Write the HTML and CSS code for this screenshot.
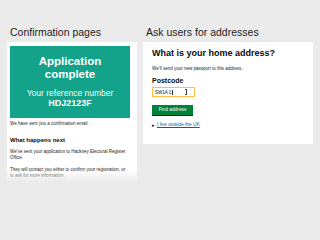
FILE: index.html
```html
<!DOCTYPE html>
<html>
<head>
<meta charset="utf-8">
<link rel="stylesheet" href="styles.css">
</head>
<body>
<main class="page">
  <section class="col col-left">
    <h2 class="col-title">Confirmation pages</h2>
    <div class="card card-confirm">
      <div class="panel">
        <div class="panel-title">Application<br>complete</div>
        <div class="panel-ref">Your reference number</div>
        <div class="panel-code">HDJ2123F</div>
      </div>
      <p class="small sent">We have sent you a confirmation email.</p>
      <h3 class="sub">What happens next</h3>
      <p class="small p1">We’ve sent your application to Hackney Electoral Register Office.</p>
      <p class="small p2">They will contact you either to confirm your registration, or to ask for more information.</p>
    </div>
  </section>
  <section class="col col-right">
    <h2 class="col-title">Ask users for addresses</h2>
    <div class="card card-address">
      <h3 class="q">What is your home address?</h3>
      <p class="small hint">We’ll send your new passport to this address.</p>
      <label class="label">Postcode</label>
      <div class="input"><span class="val">SW1A 1</span><span class="cursor"></span><span class="caret"></span></div>
      <div class="btn">Find address</div>
      <div class="link-row"><span class="tri">&#9656;</span><span class="link">I live outside the UK</span></div>
    </div>
  </section>
</main>
</body>
</html>
```

FILE: styles.css
```css
* { box-sizing: border-box; margin: 0; padding: 0; }
html, body { width: 320px; height: 240px; overflow: hidden; }
body {
  background: #ebebeb;
  font-family: "Liberation Sans", Arial, sans-serif;
  color: #0b0c0c;
}
.page {
  display: flex;
  gap: 6px;
  padding: 26px 0 0 7px;
}
.col { display: flex; flex-direction: column; }
.col-left { width: 130px; }
.col-right { width: 170px; }
.col-title {
  font-weight: normal;
  font-size: 10.5px;
  line-height: 13px;
  color: #1e1e1e;
  padding-left: 3px;
  margin-bottom: 3px;
  white-space: nowrap;
}
.card {
  background: #fff;
  position: relative;
}
.card-confirm {
  padding: 4px 7px 0 3px;
  height: 140px;
  overflow: hidden;
}
.card-confirm::after {
  content: "";
  position: absolute;
  left: 0; right: 0; bottom: 0;
  height: 12px;
  background: linear-gradient(to bottom, rgba(235,235,235,0), #ebebeb);
}
.panel {
  background: #13a38b;
  color: #fff;
  text-align: center;
  padding: 9px 0 10px;
}
.panel-title {
  font-weight: bold;
  font-size: 11.5px;
  line-height: 12.5px;
}
.panel-ref {
  font-size: 8.5px;
  line-height: 10px;
  margin-top: 8px;
  color: #f2fbf9;
}
.panel-code {
  font-weight: bold;
  font-size: 9px;
  line-height: 10px;
}
.small {
  font-size: 4.5px;
  line-height: 6px;
  color: #222;
}
.sent { margin-top: 3px; }
.sub {
  font-size: 6px;
  line-height: 8px;
  font-weight: bold;
  margin-top: 9px;
}
.p1 { margin-top: 5px; }
.p2 { margin-top: 6px; }

.card-address {
  padding: 6px 9px 16px 9px;
}
.q {
  font-size: 9px;
  line-height: 11px;
  font-weight: bold;
  white-space: nowrap;
}
.hint { margin-top: 7px; }
.label {
  display: block;
  font-size: 7px;
  line-height: 8px;
  font-weight: bold;
  margin-top: 5px;
}
.input {
  margin-top: 2px;
  width: 43px;
  height: 10px;
  border: 1.5px solid #ffbf47;
  display: flex;
  align-items: center;
  padding-left: 2px;
  font-size: 4.5px;
}
.cursor {
  width: 0.7px;
  height: 5px;
  background: #333;
  margin-left: 1px;
}
.caret {
  width: 2px;
  height: 6px;
  border: 0.7px solid #444;
  border-left: none;
  margin-left: 12px;
}
.btn {
  margin-top: 8px;
  width: 41px;
  height: 10px;
  background: #00823b;
  color: #fff;
  font-size: 4.8px;
  line-height: 10px;
  text-align: center;
  box-shadow: 0 1px 0 #003618;
}
.link-row {
  margin-top: 7px;
  display: flex;
  align-items: center;
  gap: 2px;
  font-size: 4.8px;
  line-height: 6px;
}
.tri { color: #0b0c0c; font-size: 5px; }
.link {
  color: #005ea5;
  text-decoration: underline;
}
```
